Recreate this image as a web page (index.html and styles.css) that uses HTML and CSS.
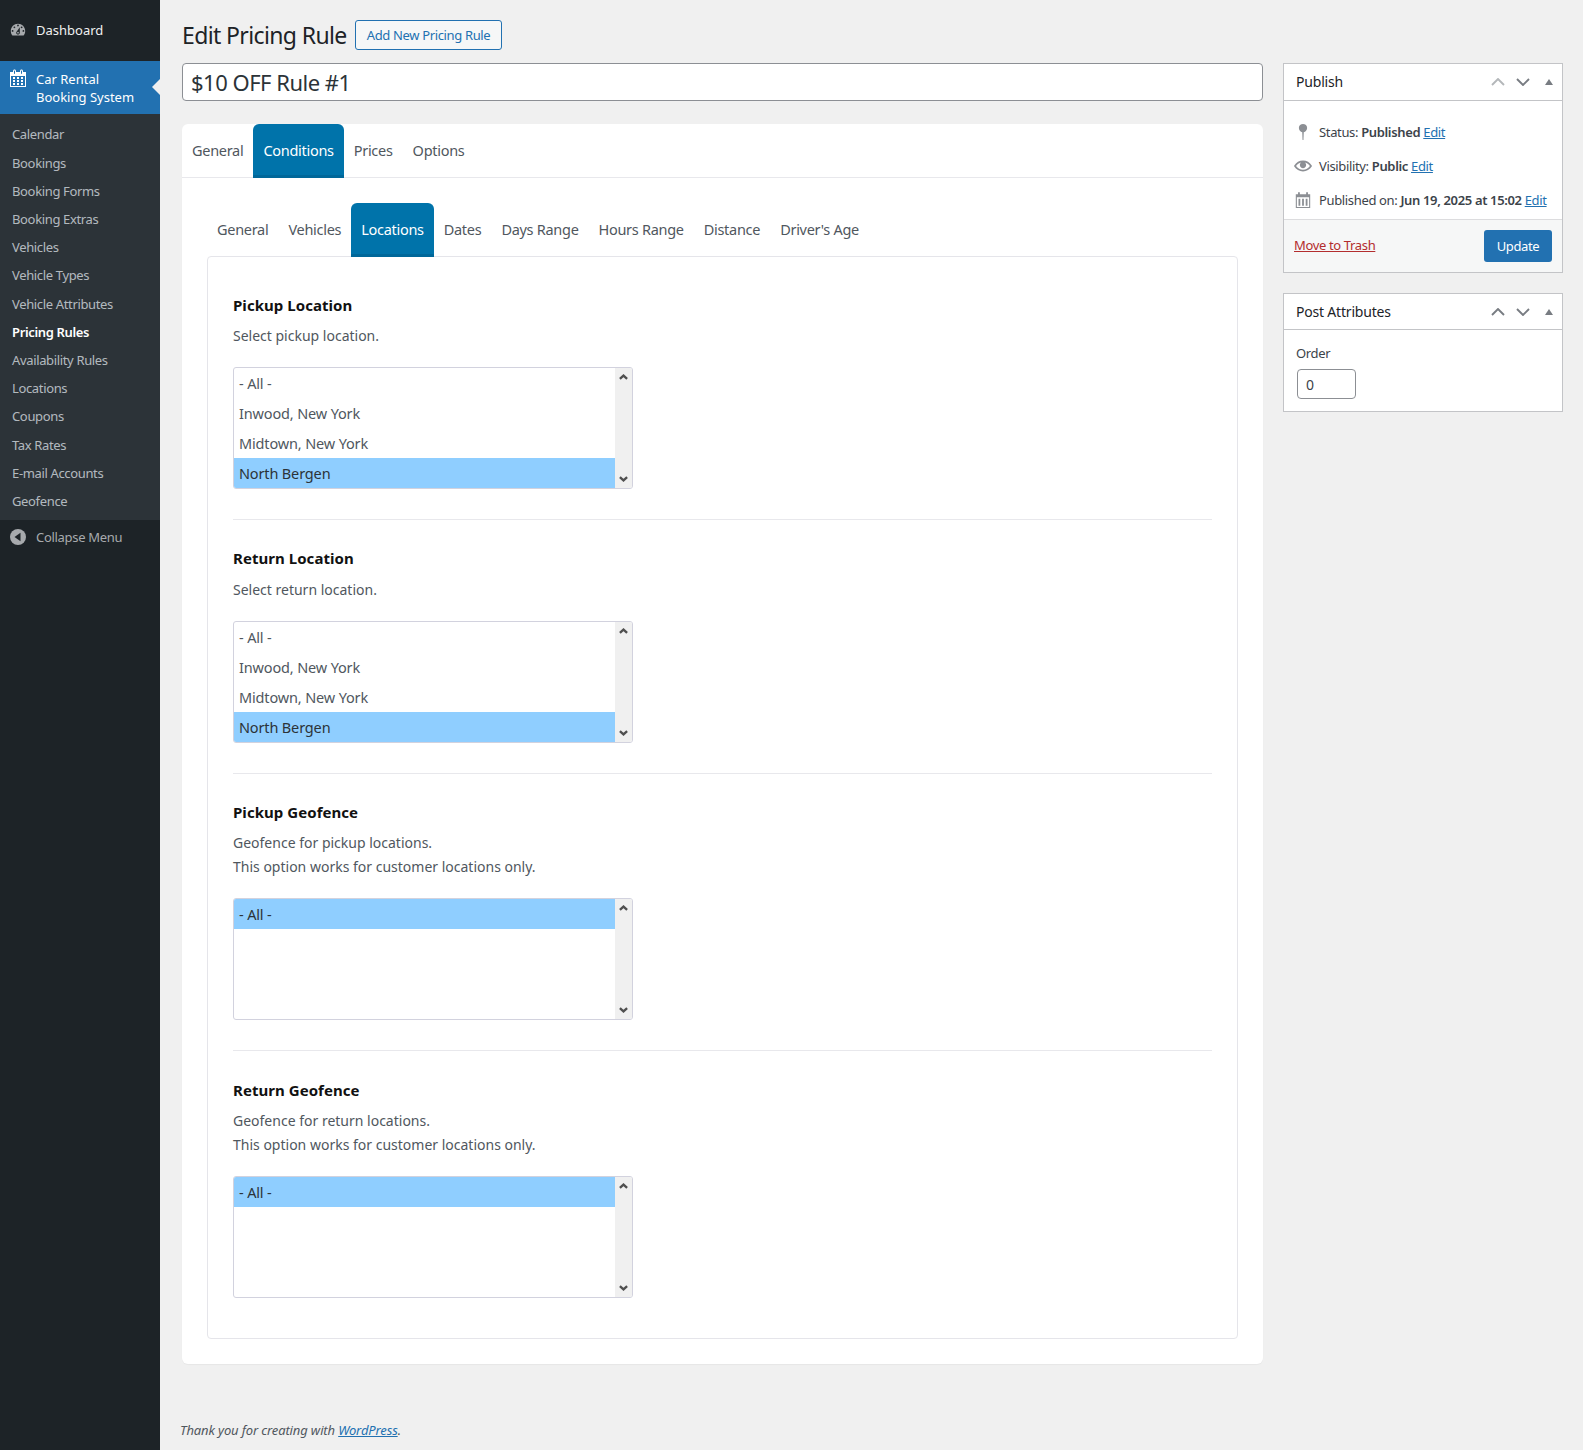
FILE: index.html
```html
<!DOCTYPE html>
<html lang="en">
<head>
<meta charset="utf-8">
<title>Edit Pricing Rule</title>
<link rel="stylesheet" href="styles.css">
</head>
<body>
<div class="app">
  <nav class="sidebar">
    <a class="menu-top dash">
      <svg class="mi" viewBox="0 0 20 20"><path fill-rule="evenodd" d="M3.76 16h12.48c1.1-1.37 1.76-3.11 1.76-5 0-4.42-3.58-8-8-8s-8 3.58-8 8c0 1.89.66 3.63 1.76 5zM10 4c.55 0 1 .45 1 1s-.45 1-1 1-1-.45-1-1 .45-1 1-1zM6 6c.55 0 1 .45 1 1s-.45 1-1 1-1-.45-1-1 .45-1 1-1zm8 0c.55 0 1 .45 1 1s-.45 1-1 1-1-.45-1-1 .45-1 1-1zm-5.37 5.55L12 7v6c0 1.1-.9 2-2 2s-2-.9-2-2c0-.57.24-1.08.63-1.45zM4 10c.55 0 1 .45 1 1s-.45 1-1 1-1-.45-1-1 .45-1 1-1zm12 0c.55 0 1 .45 1 1s-.45 1-1 1-1-.45-1-1 .45-1 1-1zm-5 3c0-.55-.45-1-1-1s-1 .45-1 1 .45 1 1 1 1-.45 1-1z"/></svg>
      <span>Dashboard</span>
    </a>
    <a class="menu-top current">
      <svg class="mi" viewBox="0 0 20 20"><path fill-rule="evenodd" d="M15 4h3v15H2V4h3V3c0-.41.15-.76.44-1.06.29-.29.65-.44 1.06-.44s.77.15 1.06.44c.29.3.44.65.44 1.06v1h4V3c0-.41.15-.76.44-1.06.29-.29.65-.44 1.06-.44s.77.15 1.06.44c.29.3.44.65.44 1.06v1zM6 3v2.5c0 .14.05.26.15.35.09.1.21.15.35.15s.26-.05.35-.15c.1-.09.15-.21.15-.35V3c0-.14-.05-.26-.15-.35-.09-.1-.21-.15-.35-.15s-.26.05-.35.15c-.1.09-.15.21-.15.35zm7 0v2.5c0 .14.05.26.14.35.1.1.22.15.36.15s.26-.05.36-.15c.09-.09.14-.21.14-.35V3c0-.14-.05-.26-.14-.35-.1-.1-.22-.15-.36-.15s-.26.05-.36.15c-.09.09-.14.21-.14.35zm4 15V8H3v10h14zM7 9v2H5V9h2zm2 0h2v2H9V9zm4 2V9h2v2h-2zm-6 1v2H5v-2h2zm2 0h2v2H9v-2zm4 2v-2h2v2h-2zm-6 1v2H5v-2h2zm4 2H9v-2h2v2zm4 0h-2v-2h2v2z"/></svg>
      <span>Car Rental<br>Booking System</span>
    </a>
    <ul class="submenu">
      <li>Calendar</li>
      <li>Bookings</li>
      <li>Booking Forms</li>
      <li>Booking Extras</li>
      <li>Vehicles</li>
      <li>Vehicle Types</li>
      <li>Vehicle Attributes</li>
      <li class="on">Pricing Rules</li>
      <li>Availability Rules</li>
      <li>Locations</li>
      <li>Coupons</li>
      <li>Tax Rates</li>
      <li>E-mail Accounts</li>
      <li>Geofence</li>
    </ul>
    <a class="collapse">
      <svg class="mi" viewBox="0 0 16 16"><circle cx="8" cy="8" r="8"/><path class="cut" d="M10.5 3.8v8.4L4.5 8z"/></svg>
      <span>Collapse Menu</span>
    </a>
  </nav>

  <main class="main">
    <header class="head">
      <h1>Edit Pricing Rule</h1>
      <a class="add-new">Add New Pricing Rule</a>
    </header>

    <div class="columns">
      <div class="col-left">
        <div class="title-input">$10 OFF Rule #1</div>

        <section class="card">
          <div class="tabs">
            <a class="tab">General</a>
            <a class="tab active">Conditions</a>
            <a class="tab">Prices</a>
            <a class="tab">Options</a>
          </div>
          <div class="card-body">
            <div class="tabs sub">
              <a class="tab">General</a>
              <a class="tab">Vehicles</a>
              <a class="tab active">Locations</a>
              <a class="tab">Dates</a>
              <a class="tab">Days Range</a>
              <a class="tab">Hours Range</a>
              <a class="tab">Distance</a>
              <a class="tab">Driver's Age</a>
            </div>
            <div class="panel">
              <div class="field single">
                <h3>Pickup Location</h3>
                <p>Select pickup location.</p>
                <div class="listbox">
                  <ul>
                    <li>- All -</li>
                    <li>Inwood, New York</li>
                    <li>Midtown, New York</li>
                    <li class="sel">North Bergen</li>
                  </ul>
                  <div class="track">
                    <svg viewBox="0 0 10 6"><path d="M1 5l4-3.6L9 5"/></svg>
                    <svg viewBox="0 0 10 6"><path d="M1 1l4 3.6L9 1"/></svg>
                  </div>
                </div>
              </div>
              <div class="field single">
                <h3>Return Location</h3>
                <p>Select return location.</p>
                <div class="listbox">
                  <ul>
                    <li>- All -</li>
                    <li>Inwood, New York</li>
                    <li>Midtown, New York</li>
                    <li class="sel">North Bergen</li>
                  </ul>
                  <div class="track">
                    <svg viewBox="0 0 10 6"><path d="M1 5l4-3.6L9 5"/></svg>
                    <svg viewBox="0 0 10 6"><path d="M1 1l4 3.6L9 1"/></svg>
                  </div>
                </div>
              </div>
              <div class="field">
                <h3>Pickup Geofence</h3>
                <p>Geofence for pickup locations.<br>This option works for customer locations only.</p>
                <div class="listbox">
                  <ul>
                    <li class="sel">- All -</li>
                  </ul>
                  <div class="track">
                    <svg viewBox="0 0 10 6"><path d="M1 5l4-3.6L9 5"/></svg>
                    <svg viewBox="0 0 10 6"><path d="M1 1l4 3.6L9 1"/></svg>
                  </div>
                </div>
              </div>
              <div class="field">
                <h3>Return Geofence</h3>
                <p>Geofence for return locations.<br>This option works for customer locations only.</p>
                <div class="listbox">
                  <ul>
                    <li class="sel">- All -</li>
                  </ul>
                  <div class="track">
                    <svg viewBox="0 0 10 6"><path d="M1 5l4-3.6L9 5"/></svg>
                    <svg viewBox="0 0 10 6"><path d="M1 1l4 3.6L9 1"/></svg>
                  </div>
                </div>
              </div>
            </div>
          </div>
        </section>
      </div>

      <aside class="col-side">
        <section class="box publish">
          <div class="box-head">
            <h2>Publish</h2>
            <svg class="ctl faint" viewBox="0 0 14 8"><path d="M1 7l6-6 6 6"/></svg>
            <svg class="ctl" viewBox="0 0 14 8"><path d="M1 1l6 6 6-6"/></svg>
            <svg class="tri" viewBox="0 0 8 6"><path d="M4 0l4 6H0z"/></svg>
          </div>
          <div class="pub-rows">
            <div class="pub-row">
              <svg class="pi" viewBox="0 0 20 20"><circle cx="10" cy="5.6" r="4.6"/><path d="M9.1 9h1.8l-.4 10h-1z"/></svg>
              <span>Status: <b>Published</b> <a>Edit</a></span>
            </div>
            <div class="pub-row">
              <svg class="pi" viewBox="0 0 20 20"><path fill-rule="evenodd" d="M19.7 9.4C17.7 6 14 3.9 10 3.9S2.3 6 .3 9.4L0 10l.3.6c2 3.4 5.7 5.5 9.7 5.5s7.7-2.1 9.7-5.5l.3-.6-.3-.6zM10 14.1c-3.1 0-6-1.6-7.7-4.1C3.6 8 5.7 6.6 8 6.1c-.9.6-1.5 1.7-1.5 2.9 0 1.9 1.6 3.5 3.5 3.5s3.5-1.6 3.5-3.5c0-1.2-.6-2.3-1.5-2.9 2.3.5 4.4 1.9 5.7 3.9-1.7 2.5-4.6 4.1-7.7 4.1z"/></svg>
              <span>Visibility: <b>Public</b> <a>Edit</a></span>
            </div>
            <div class="pub-row">
              <svg class="pi" viewBox="0 0 20 20"><path fill-rule="evenodd" d="M2 3.5h2.5V1.5h2v2h7v-2h2v2H18V19H2zM3.2 7v10.8h13.6V7zM5 8.5h2v8H5zM9 8.5h2v8H9zM13 8.5h2v8h-2z"/></svg>
              <span>Published on: <b>Jun 19, 2025 at 15:02</b> <a>Edit</a></span>
            </div>
          </div>
          <div class="pub-foot">
            <a class="trash">Move to Trash</a>
            <a class="update">Update</a>
          </div>
        </section>

        <section class="box attrs">
          <div class="box-head short">
            <h2>Post Attributes</h2>
            <svg class="ctl" viewBox="0 0 14 8"><path d="M1 7l6-6 6 6"/></svg>
            <svg class="ctl" viewBox="0 0 14 8"><path d="M1 1l6 6 6-6"/></svg>
            <svg class="tri" viewBox="0 0 8 6"><path d="M4 0l4 6H0z"/></svg>
          </div>
          <div class="attrs-body">
            <div class="order-label">Order</div>
            <div class="order-input">0</div>
          </div>
        </section>
      </aside>
    </div>

    <footer class="foot"><i>Thank you for creating with <a>WordPress</a>.</i></footer>
  </main>
</div>
</body>
</html>
```

FILE: styles.css
```css
* { box-sizing: border-box; }
html, body { margin: 0; height: 100%; }
body {
  background: #f0f0f0;
  color: #3c434a;
  font-family: "Noto Sans", "Open Sans", sans-serif;
  font-size: 13px;
  letter-spacing: -0.35px;
  line-height: 18px;
}
a { color: #2271b1; }
ul { list-style: none; margin: 0; padding: 0; }
h1, h2, h3, p { margin: 0; }

.app { display: flex; min-height: 1450px; }

/* sidebar */
.sidebar { width: 160px; flex: none; background: #1d2327; color: #f0f0f1; }
.mi { width: 18px; height: 18px; flex: none; fill: #a7aaad; }
.menu-top { display: flex; color: #f0f0f1; gap: 9px; padding-left: 9px; position: relative; letter-spacing: 0; }
.dash { height: 61px; align-items: center; padding-bottom: 2px; }
.current { height: 53px; background: #2271b1; color: #fff; padding-top: 9px; }
.current .mi { fill: #fff; margin-top: -2px; width: 20px; height: 20px; margin-left: -1px; margin-right: -1px; }
.current::after {
  content: "";
  position: absolute;
  right: 0;
  top: 18px;
  border: 8px solid transparent;
  border-right-color: #f0f0f1;
  border-left: 0;
}
.submenu { background: #2c3338; padding: 6.3px 0 4.62px; }
.submenu li {
  height: 28.22px;
  line-height: 28.22px;
  padding-left: 12px;
  color: rgba(240, 246, 252, 0.7);
}
.submenu .on { color: #fff; font-weight: 600; }
.collapse { display: flex; align-items: center; gap: 10px; padding: 8px 0 0 10px; color: #a7aaad; letter-spacing: -0.3px; }
.collapse .mi { width: 16px; height: 16px; }
.collapse .cut { fill: #1d2327; }

/* main */
.main { flex: 1; min-width: 0; padding: 20px 20px 0 22px; display: flex; flex-direction: column; }
.head { display: flex; align-items: center; height: 30px; gap: 8px; }
h1 { font-size: 23px; font-weight: 400; color: #1d2327; letter-spacing: -0.62px; line-height: 30px; }
.add-new {
  height: 30px;
  line-height: 28px;
  padding: 0 11px;
  border: 1px solid #2271b1;
  border-radius: 3px;
  background: #f6f7f7;
  white-space: nowrap;
}
.columns { display: flex; gap: 19px; margin-top: 13px; }
.col-left { width: 1081px; flex: none; margin-right: 1px; }
.col-side { width: 280px; flex: none; display: flex; flex-direction: column; gap: 20px; }

.title-input {
  height: 38px;
  border: 1px solid #8c8f94;
  border-radius: 4px;
  background: #fff;
  padding-left: 8px;
  font-size: 22px;
  line-height: 36px;
  color: #2c3338;
  letter-spacing: -0.5px;
}

/* card & tabs */
.card { margin-top: 23px; background: #fff; border-radius: 6px; box-shadow: 0 1px 1px rgba(0, 0, 0, 0.04); }
.tabs { display: flex; height: 54px; border-bottom: 1px solid #e8e8ec; }
.tab { height: 54px; padding: 0 10px; font-size: 14.5px; line-height: 52px; color: #50575e; letter-spacing: -0.29px; }
.tab.active {
  background: #0073aa;
  color: #fff;
  border-radius: 6px 6px 0 0;
  border-bottom: 3px solid #006799;
}
.card-body { padding: 25px; }
.tabs.sub { border-bottom: 0; height: 53px; }
.panel {
  border: 1px solid #e5e5ea;
  border-radius: 4px;
  padding: 38px 25px 40px;
}
.field + .field { margin-top: 30px; padding-top: 28px; border-top: 1px solid #e8e8ec; }
.field:last-child { padding-top: 29px; }
h3 { font-size: 15px; font-weight: 700; color: #111; line-height: 20px; letter-spacing: 0.05px; }
.field p { font-size: 14px; line-height: 24px; margin-top: 9px; color: #50575e; letter-spacing: 0; }
.field.single + .field.single p { margin-top: 10px; }
.listbox {
  display: flex;
  width: 400px;
  height: 122px;
  margin-top: 19px;
  border: 1px solid #d2d2de;
  border-radius: 3px;
  overflow: hidden;
  background: #fff;
}
.listbox ul { flex: 1; }
.listbox li { height: 30px; padding-left: 5px; font-size: 14.5px; line-height: 30px; color: #50575e; letter-spacing: -0.15px; }
.listbox .sel { background: #8fceff; color: #2c3338; }
.track {
  width: 17px;
  background: #f0f0f0;
  display: flex;
  flex-direction: column;
  justify-content: space-between;
  align-items: center;
  padding: 6px 0 6px;
}
.track svg { width: 9px; height: 6px; fill: none; stroke: #505050; stroke-width: 2.6; }

/* right boxes */
.box { background: #fff; border: 1px solid #c3c4c7; }
.box-head { display: flex; align-items: center; height: 37px; padding-left: 12px; border-bottom: 1px solid #c3c4c7; }
.box-head.short { height: 36px; }
.box-head h2 { flex: 1; font-size: 14px; font-weight: 400; color: #1d2327; letter-spacing: -0.2px; }
.ctl { width: 14px; height: 8px; margin-right: 11.5px; fill: none; stroke: #787c82; stroke-width: 1.9; }
.ctl.faint { stroke: #b4b7ba; }
.tri { width: 8px; height: 6px; margin-right: 9px; margin-left: 3.5px; fill: #787c82; }
.pub-rows { padding: 14px 0 2px 10px; }
.pub-row { display: flex; align-items: center; gap: 7px; height: 34px; font-size: 13px; }
.pi { width: 18px; height: 18px; flex: none; fill: #8c8f94; }
.pub-row b { font-weight: 600; color: #3c434a; }
.pub-row a, .foot a, .trash { text-decoration: underline; }
.pub-foot {
  display: flex;
  justify-content: space-between;
  align-items: center;
  height: 53px;
  padding: 0 10px;
  background: #f6f7f7;
  border-top: 1px solid #dcdcde;
}
.trash { color: #b32d2e; margin-bottom: 2px; }
.update {
  width: 68px;
  height: 32px;
  line-height: 32px;
  text-align: center;
  background: #2271b1;
  color: #fff;
  border-radius: 3px;
}
.attrs-body { padding: 14px 13px 12px 12px; }
.order-label { color: #3c434a; line-height: 18px; }
.order-input {
  width: 59px;
  height: 30px;
  margin: 7px 0 0 1px;
  border: 1px solid #8c8f94;
  border-radius: 4px;
  padding-left: 8px;
  line-height: 29px;
  font-size: 14px;
}
.foot { margin-top: 57px; margin-left: -2px; color: #50575e; letter-spacing: -0.13px; }
```
